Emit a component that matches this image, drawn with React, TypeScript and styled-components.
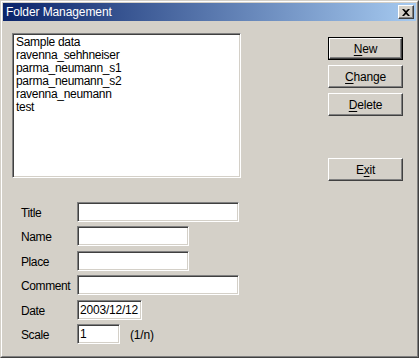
import { Fragment } from 'react'
import styled, { createGlobalStyle } from 'styled-components'

const GlobalStyle = createGlobalStyle`
  html, body {
    margin: 0;
    padding: 0;
    background: #d4d0c8;
  }
  body {
    font-family: "Liberation Sans", Arial, sans-serif;
    font-size: 12px;
    color: #000;
  }
`

const Window = styled.div`
  width: 419px;
  height: 358px;
  box-sizing: border-box;
  background: #d4d0c8;
  border-style: solid;
  border-width: 1px;
  border-color: #d4d0c8 #404040 #404040 #d4d0c8;
  display: flex;
  flex-direction: column;
`

const Frame = styled.div`
  flex: 1;
  display: flex;
  flex-direction: column;
  border-style: solid;
  border-width: 1px;
  border-color: #fff #808080 #808080 #fff;
  padding: 1px;
`

const TitleBar = styled.div`
  height: 18px;
  display: flex;
  align-items: center;
  justify-content: space-between;
  padding: 0 2px 0 3px;
  background: linear-gradient(to right, #0a246a, #a6caf0);
  color: #fff;
  font-size: 12px;
  letter-spacing: -0.1px;
`

const CloseButton = styled.div`
  width: 16px;
  height: 14px;
  box-sizing: border-box;
  background: #d4d0c8;
  border-style: solid;
  border-width: 1px;
  border-color: #fff #404040 #404040 #fff;
  box-shadow: inset -1px -1px 0 #808080;
  display: flex;
  align-items: center;
  justify-content: center;
`

const Body = styled.div`
  flex: 1;
  display: flex;
  flex-direction: column;
  padding: 12px 13px 0 9px;
`

const TopRow = styled.div`
  display: flex;
  justify-content: space-between;
`

const ListBox = styled.div`
  width: 229px;
  height: 145px;
  box-sizing: border-box;
  background: #fff;
  border-style: solid;
  border-width: 1px;
  border-color: #808080 #fff #fff #808080;
  box-shadow: inset 1px 1px 0 #404040, inset -1px -1px 0 #d4d0c8;
  padding: 2px 3px;
`

const ListItem = styled.div`
  height: 13px;
  line-height: 13px;
  white-space: nowrap;
  letter-spacing: -0.3px;
`

const ButtonColumn = styled.div`
  display: flex;
  flex-direction: column;
  gap: 5px;
  padding-top: 4px;
  width: 75px;
`

const Button = styled.div<{ $default?: boolean; $spaced?: boolean }>`
  height: 23px;
  box-sizing: border-box;
  margin-top: ${(p) => (p.$spaced ? '37px' : '0')};
  border: 1px solid ${(p) => (p.$default ? '#000' : 'transparent')};
  display: flex;
`

const ButtonFace = styled.div<{ $default?: boolean }>`
  flex: 1;
  display: flex;
  align-items: center;
  justify-content: center;
  border-style: solid;
  border-width: 1px;
  border-color: #fff #404040 #404040 #fff;
  box-shadow: inset -1px -1px 0 #808080;
  margin: ${(p) => (p.$default ? '0' : '-1px')};
  letter-spacing: -0.2px;

  u {
    text-decoration: underline;
    text-underline-offset: 2px;
  }
`

const Form = styled.div`
  display: grid;
  grid-template-columns: 56px auto;
  row-gap: 4.4px;
  margin-top: 21px;
  padding-left: 9px;
  align-items: center;
`

const Label = styled.div`
  font-size: 12px;
  letter-spacing: -0.4px;
  padding-top: 2px;
`

const FieldRow = styled.div`
  display: flex;
  align-items: center;
  gap: 10px;
`

const Field = styled.div<{ $w: number }>`
  width: ${(p) => p.$w}px;
  height: 20px;
  box-sizing: border-box;
  background: #fff;
  border-style: solid;
  border-width: 1px;
  border-color: #808080 #fff #fff #808080;
  box-shadow: inset 1px 1px 0 #404040, inset -1px -1px 0 #d4d0c8;
  padding: 2px 0 0 2px;
  line-height: 15px;
  letter-spacing: -0.2px;
  white-space: nowrap;
`

const Hint = styled.span`
  letter-spacing: -0.2px;
  padding-top: 2px;
`

const items = [
  'Sample data',
  'ravenna_sehhneiser',
  'parma_neumann_s1',
  'parma_neumann_s2',
  'ravenna_neumann',
  'test',
]

const fields: { label: string; w: number; value?: string; hint?: string }[] = [
  { label: 'Title', w: 162 },
  { label: 'Name', w: 112 },
  { label: 'Place', w: 112 },
  { label: 'Comment', w: 162 },
  { label: 'Date', w: 65, value: '2003/12/12' },
  { label: 'Scale', w: 43, value: '1', hint: '(1/n)' },
]

export default function App() {
  return (
    <>
      <GlobalStyle />
      <Window>
        <Frame>
          <TitleBar>
            <span>Folder Management</span>
            <CloseButton>
              <svg width="8" height="7" viewBox="0 0 8 7">
                <path d="M0 0h2l2 2 2-2h2L5 3.5 8 7H6L4 5 2 7H0l3-3.5z" fill="#000" />
              </svg>
            </CloseButton>
          </TitleBar>
          <Body>
            <TopRow>
              <ListBox>
                {items.map((it) => (
                  <ListItem key={it}>{it}</ListItem>
                ))}
              </ListBox>
              <ButtonColumn>
                <Button $default>
                  <ButtonFace $default>
                    <span><u>N</u>ew</span>
                  </ButtonFace>
                </Button>
                <Button>
                  <ButtonFace>
                    <span><u>C</u>hange</span>
                  </ButtonFace>
                </Button>
                <Button>
                  <ButtonFace>
                    <span><u>D</u>elete</span>
                  </ButtonFace>
                </Button>
                <Button $spaced>
                  <ButtonFace>
                    <span>E<u>x</u>it</span>
                  </ButtonFace>
                </Button>
              </ButtonColumn>
            </TopRow>
            <Form>
              {fields.map((f) => (
                <Fragment key={f.label}>
                  <Label>{f.label}</Label>
                  <FieldRow>
                    <Field $w={f.w}>{f.value}</Field>
                    {f.hint && <Hint>{f.hint}</Hint>}
                  </FieldRow>
                </Fragment>
              ))}
            </Form>
          </Body>
        </Frame>
      </Window>
    </>
  )
}
